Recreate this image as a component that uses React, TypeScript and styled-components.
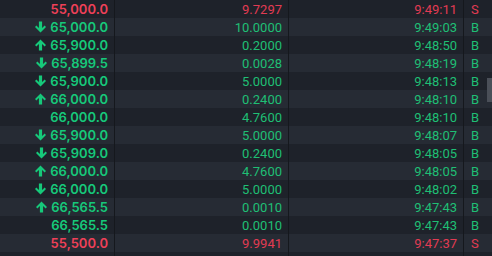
import React from 'react';
import styled, { createGlobalStyle } from 'styled-components';

const GlobalStyle = createGlobalStyle`
  html, body { margin: 0; padding: 0; background: #1e222a; }
  body { font-family: Roboto, "Liberation Sans", sans-serif; overflow: hidden; }
`;

const RED = '#ef4058';
const GREEN = '#16c97a';
const RED_SOFT = '#e23b53';
const GREEN_SOFT = '#1fbf74';

type Side = 'B' | 'S';
type Trend = 'up' | 'down' | null;

interface Trade {
  price: string;
  amount: string;
  time: string;
  side: Side;
  trend: Trend;
}

const trades: Trade[] = [
  { price: '55,000.0', amount: '9.7297', time: '9:49:11', side: 'S', trend: null },
  { price: '65,000.0', amount: '10.0000', time: '9:49:03', side: 'B', trend: 'down' },
  { price: '65,900.0', amount: '0.2000', time: '9:48:50', side: 'B', trend: 'up' },
  { price: '65,899.5', amount: '0.0028', time: '9:48:19', side: 'B', trend: 'down' },
  { price: '65,900.0', amount: '5.0000', time: '9:48:13', side: 'B', trend: 'down' },
  { price: '66,000.0', amount: '0.2400', time: '9:48:10', side: 'B', trend: 'up' },
  { price: '66,000.0', amount: '4.7600', time: '9:48:10', side: 'B', trend: null },
  { price: '65,900.0', amount: '5.0000', time: '9:48:07', side: 'B', trend: 'down' },
  { price: '65,909.0', amount: '0.2400', time: '9:48:05', side: 'B', trend: 'down' },
  { price: '66,000.0', amount: '4.7600', time: '9:48:05', side: 'B', trend: 'up' },
  { price: '66,000.0', amount: '5.0000', time: '9:48:02', side: 'B', trend: 'down' },
  { price: '66,565.5', amount: '0.0010', time: '9:47:43', side: 'B', trend: 'up' },
  { price: '66,565.5', amount: '0.0010', time: '9:47:43', side: 'B', trend: null },
  { price: '55,500.0', amount: '9.9941', time: '9:47:37', side: 'S', trend: null },
];

const Wrapper = styled.div`
  position: relative;
  width: 492px;
  height: 256px;
  overflow: hidden;
`;

const Table = styled.div`
  display: flex;
  flex-direction: column;
`;

const Row = styled.div<{ $odd: boolean }>`
  display: grid;
  grid-template-columns: 114px 174px 175px 29px;
  height: 18px;
  background: ${(p) => (p.$odd ? '#262b34' : '#1e222a')};
`;

const Cell = styled.div<{ $sep?: boolean }>`
  display: flex;
  align-items: center;
  justify-content: flex-end;
  padding-right: 6px;
  border-left: ${(p) => (p.$sep ? '1px solid #15181d' : 'none')};
  white-space: nowrap;
`;

const PriceText = styled.span<{ $color: string }>`
  display: flex;
  align-items: center;
  gap: 4px;
  font-family: Inter, Roboto, sans-serif;
  font-size: 13px;
  font-weight: 600;
  color: ${(p) => p.$color};
`;

const Plain = styled.span<{ $color: string }>`
  font-size: 13px;
  color: ${(p) => p.$color};
`;

const SideCell = styled.div`
  display: flex;
  align-items: center;
  padding-left: 7px;
  border-left: 1px solid #15181d;
`;

const Thumb = styled.div`
  position: absolute;
  right: 0;
  top: 78px;
  width: 5px;
  height: 24px;
  background: #4a4f58;
`;

const Arrow: React.FC<{ dir: 'up' | 'down'; color: string }> = ({ dir, color }) => (
  <svg
    width="11"
    height="12"
    viewBox="0 0 11 12"
    style={{ transform: dir === 'up' ? 'rotate(180deg)' : undefined }}
  >
    <path d="M3.9 0.5h3.2v6.6l2.5-2.5 1.4 1.5-5.5 5.5L0 6.1l1.4-1.5 2.5 2.5z" fill={color} />
  </svg>
);

export default function App() {
  return (
    <Wrapper>
      <GlobalStyle />
      <Table>
        {trades.map((t, i) => {
          const isSell = t.side === 'S';
          const strong = isSell ? RED : GREEN;
          const soft = isSell ? RED_SOFT : GREEN_SOFT;
          return (
            <Row key={i} $odd={i % 2 === 1}>
              <Cell>
                <PriceText $color={strong}>
                  {t.trend && <Arrow dir={t.trend} color={strong} />}
                  {t.price}
                </PriceText>
              </Cell>
              <Cell $sep>
                <Plain $color={soft}>{t.amount}</Plain>
              </Cell>
              <Cell $sep>
                <Plain $color={soft}>{t.time}</Plain>
              </Cell>
              <SideCell>
                <Plain $color={soft}>{t.side}</Plain>
              </SideCell>
            </Row>
          );
        })}
        <Row $odd={false}>
          <Cell />
          <Cell $sep />
          <Cell $sep />
          <SideCell />
        </Row>
      </Table>
      <Thumb />
    </Wrapper>
  );
}
